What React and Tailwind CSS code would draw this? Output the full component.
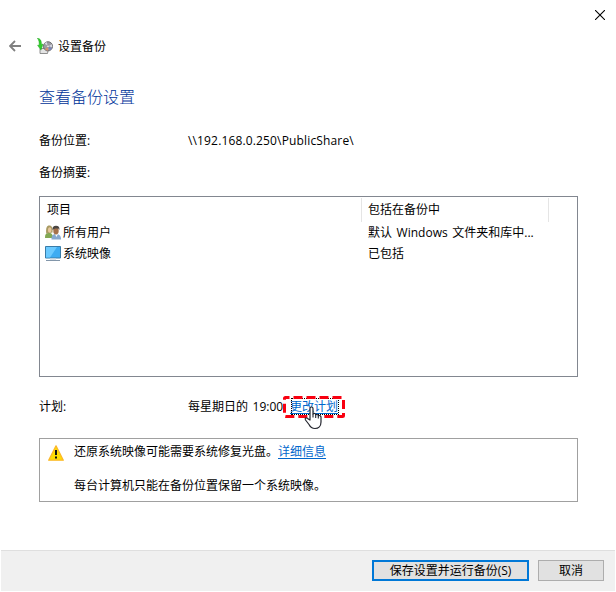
import React from 'react';

const backupItems = [
  { name: '所有用户', included: '默认 Windows 文件夹和库中...', icon: <UsersIcon /> },
  { name: '系统映像', included: '已包括', icon: <MonitorIcon /> },
];

function App() {
  return (
    <div className="w-[616px] h-[592px] bg-white text-black text-[12px] leading-[16px] font-['Open_Sans','Noto_Sans_CJK_SC',sans-serif] flex flex-col overflow-hidden whitespace-nowrap">
      <div className="h-[30px] shrink-0 flex justify-end pt-[10px] pr-[11px]">
        <CloseIcon />
      </div>

      <div className="h-8 shrink-0 flex items-center pl-[9px]">
        <BackIcon />
        <div className="ml-4 mr-[5px]">
          <BackupIcon />
        </div>
        <span className="pt-[2px]">设置备份</span>
      </div>

      <main className="flex-1 pl-[39px] pr-[38px]">
        <h1 className="mt-[23px] h-6 text-[16px] leading-6 font-light text-[#003399]">查看备份设置</h1>

        <div className="flex mt-6">
          <span className="w-[149px]">备份位置:</span>
          <span className="tracking-[0.15px]">\\192.168.0.250\PublicShare\</span>
        </div>
        <div className="mt-4">备份摘要:</div>

        <div className="mt-[15px] h-[181px] border border-[#828790] pt-px">
          <div className="flex h-6 items-center">
            <div className="w-[322px] h-full pl-[7px] pt-1 border-r border-[#e5e5e5]">项目</div>
            <div className="w-[187px] h-full pl-[6px] pt-1 border-r border-[#e5e5e5]">包括在备份中</div>
          </div>
          {backupItems.map((item) => (
            <div key={item.name} className="flex h-[21px] items-center">
              <div className="w-[328px] flex items-center pl-[5px]">
                {item.icon}
                <span className="ml-[2px]">{item.name}</span>
              </div>
              <span className="[word-spacing:1.5px]">{item.included}</span>
            </div>
          ))}
        </div>

        <div className="relative flex mt-[22px] h-[17px]">
          <span className="w-[149px]">计划:</span>
          <span className="[word-spacing:1.5px]">每星期日的 19:00</span>
          <a className="absolute left-[251px] top-0 h-4 text-[#0066cc] underline underline-offset-2">更改计划</a>
          <div className="absolute left-[252px] top-[-1px] w-[48px] h-[17px] border border-dotted border-black"></div>
          <HighlightBox />
          <HandCursor />
        </div>

        <div className="mt-[22px] h-16 border border-[#a0a0a0] flex pl-2 pt-[5px]">
          <WarningIcon />
          <div className="ml-[10px]">
            <p>
              还原系统映像可能需要系统修复光盘。
              <a className="text-[#0066cc] underline underline-offset-2">详细信息</a>
            </p>
            <p className="mt-[18px]">每台计算机只能在备份位置保留一个系统映像。</p>
          </div>
        </div>
      </main>

      <footer className="h-[41px] shrink-0 mx-px mb-px bg-[#f0f0f0] border-t border-[#dfdfdf] flex justify-end pt-[9px] pr-[11px] gap-[9px]">
        <button className="w-[157px] h-[21px] bg-[#e1e1e1] border-2 border-[#0078d7] leading-[17px]">
          保存设置并运行备份(S)
        </button>
        <button className="w-[66px] h-[21px] bg-[#e1e1e1] border border-[#adadad] leading-[19px]">取消</button>
      </footer>
    </div>
  );
}

function CloseIcon() {
  return (
    <svg width="10" height="10" viewBox="0 0 10 10" stroke="#000" strokeWidth="1.1">
      <path d="M0 0 10 10M10 0 0 10" />
    </svg>
  );
}

function BackIcon() {
  return (
    <svg width="12" height="12" viewBox="0 0 12 12" fill="none" stroke="#808080" strokeWidth="1.8">
      <path d="M6 1 1 6l5 5M1 6h11" />
    </svg>
  );
}

function BackupIcon() {
  return (
    <svg width="16" height="16" viewBox="0 0 16 16">
      <path d="M3 10.5h8.5l-1 5H3z" fill="#e4e4e4" stroke="#777" strokeWidth=".8" />
      <circle cx="11" cy="8.3" r="4.6" fill="#9c9ca2" stroke="#5c5c5c" strokeWidth=".8" />
      <path d="M11 8.3 7.5 5.5l2-1.7zM11 8.3l4-2 .3 3z" fill="#d3d4de" />
      <path d="M11 8.3 8 11.5l3 1.3z" fill="#d8916e" />
      <path d="M11 8.3l4 2-2 2.2z" fill="#7682bd" />
      <circle cx="11" cy="8.3" r="1.2" fill="#fff" stroke="#777" strokeWidth=".6" />
      <path d="M.3.3C3.4.5 4.5 2.5 4.4 6.5l1.6-.4-2 6L.6 7.3l1.6-.1C2.3 4 2 2 .3.3z" fill="#2fd02a" stroke="#1fa01c" strokeWidth=".5" />
    </svg>
  );
}

function UsersIcon() {
  return (
    <svg width="16" height="16" viewBox="0 0 16 16">
      <path d="M0 13c0-4 1-5 4-5s4 2 4 5z" fill="#83a854" />
      <path d="M1.2 8.5C.7 3 1.7.5 4.3.5S8 2.5 7.5 7.5z" fill="#a99a62" />
      <ellipse cx="4.7" cy="5" rx="1.8" ry="2.8" fill="#e6c79d" />
      <path d="M6.5 14.5c0-4 1.3-5.5 4.5-5.5s5 1.5 5 5.5z" fill="#87a9cf" />
      <path d="m10 9 1.4 3L13 9z" fill="#fff" />
      <ellipse cx="11" cy="5.7" rx="2.7" ry="3.8" fill="#a5714b" />
      <path d="M7.5 5c-.2-3 1-4.3 3.5-4.3s3.8 1.3 3.4 4.3l-1.1-1.4H10z" fill="#4a4642" />
    </svg>
  );
}

function MonitorIcon() {
  return (
    <svg width="16" height="16" viewBox="0 0 16 16">
      <path d="M.5.5h15v11.5H.5z" fill="#3dacf2" stroke="#397ca8" />
      <path d="M1 1h11L5 11.5H1z" fill="#6bcaff" />
      <path d="M5 12.5h6V14H5z" fill="#d8e0e6" />
      <path d="M1 14h14v1H1z" fill="#8296aa" />
    </svg>
  );
}

function WarningIcon() {
  return (
    <svg width="16" height="16" viewBox="0 0 16 16" className="mt-px">
      <path d="M8 .9 15.3 15.2H.7z" fill="#ffdd00" stroke="#fbb829" strokeWidth="1.3" strokeLinejoin="round" />
      <path d="M7 5h2v5H7zM7 11.5h2v2H7z" fill="#111" />
    </svg>
  );
}

function HighlightBox() {
  return (
    <svg className="absolute left-[244px] top-[-3px]" width="62" height="22" viewBox="0 0 62 22" fill="none">
      <rect x="1.5" y="1.5" width="59" height="19" rx="1" stroke="#f90010" strokeWidth="3" strokeDasharray="9 4" strokeDashoffset="5" />
    </svg>
  );
}

function HandCursor() {
  return (
    <svg className="absolute left-[265px] top-[7px]" width="19" height="24" viewBox="0 0 19 24">
      <path
        d="M6 14V2.5C6 .5 9 .5 9 2.5V8c1-1 2.6-.6 2.7.8 1-.8 2.4-.3 2.6 1 1.3-.7 2.7 0 2.7 1.5V16c0 4-2.5 6.5-6 6.5-3 0-4.8-1.6-6-4L1.5 14c-1-2 .8-2.8 2-1.6z"
        fill="#fff"
        stroke="#23252e"
        strokeWidth="1.2"
        strokeLinejoin="round"
      />
      <path d="M9 8v3.5M11.7 9v3M14.3 10v2.5" stroke="#23252e" strokeWidth="1.1" />
    </svg>
  );
}

export default App;
